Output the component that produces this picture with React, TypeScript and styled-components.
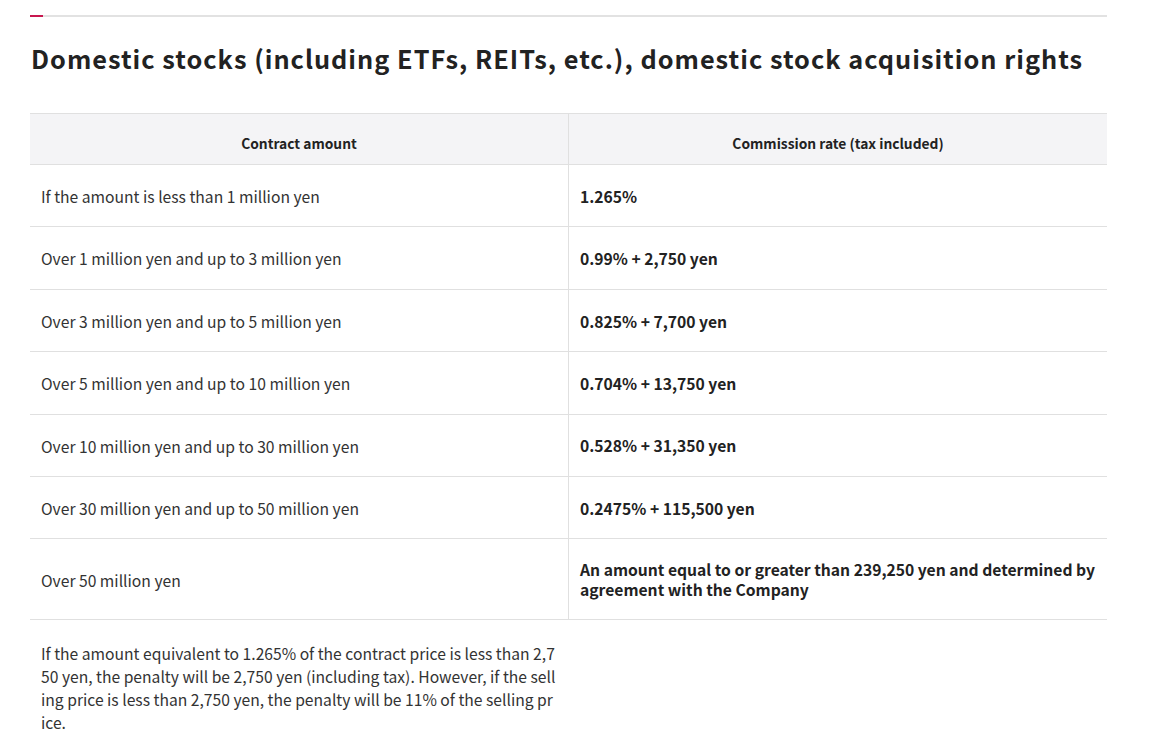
import React from "react";
import styled, { createGlobalStyle } from "styled-components";

const Global = createGlobalStyle`
  html, body { margin: 0; padding: 0; background: #fff; }
  body { font-family: "Noto Sans CJK JP", "Noto Sans", sans-serif; color: #333; }
`;

const Page = styled.div`
  padding: 15px 46px 0 30px;
`;

const Rule = styled.div`
  height: 2px;
  background: #e2e2e2;
  position: relative;
  &::before {
    content: "";
    position: absolute;
    left: 0;
    top: 0;
    width: 13px;
    height: 2px;
    background: #c8174f;
  }
`;

const Title = styled.h2`
  margin: 23px 0 0 1px;
  font-size: 25.3px;
  line-height: 36px;
  font-weight: 700;
  letter-spacing: 1px;
  color: #222;
  white-space: nowrap;
`;

const Table = styled.table`
  margin-top: 37px;
  width: 100%;
  border-collapse: collapse;
  table-layout: fixed;
  font-size: 15.66px;
`;

const Th = styled.th`
  background: #f4f4f6;
  border-top: 1px solid #e0e0e0;
  border-bottom: 1px solid #e0e0e0;
  font-size: 13.8px;
  font-weight: 700;
  line-height: 20px;
  padding: 19px 12px 11px;
  color: #222;
  text-align: center;
  & + & { border-left: 1px solid #e0e0e0; }
`;

const Td = styled.td<{ $bold?: boolean; $divider?: boolean }>`
  border-bottom: 1px solid #e0e0e0;
  border-left: ${(p) => (p.$divider ? "1px solid #e0e0e0" : "none")};
  padding: 21px 11px 19px;
  vertical-align: middle;
  font-weight: ${(p) => (p.$bold ? 700 : 400)};
  line-height: ${(p) => (p.$bold ? "20px" : "21.4px")};
  color: ${(p) => (p.$bold ? "#222" : "#333")};
`;

const NoteCell = styled.td`
  border-bottom: 1px solid #e0e0e0;
  padding: 23px 12.4px 17px 11px;
  line-height: 22.7px;
  word-break: break-all;
  color: #333;
`;

const rows: [string, string][] = [
  ["If the amount is less than 1 million yen", "1.265%"],
  ["Over 1 million yen and up to 3 million yen", "0.99% + 2,750 yen"],
  ["Over 3 million yen and up to 5 million yen", "0.825% + 7,700 yen"],
  ["Over 5 million yen and up to 10 million yen", "0.704% + 13,750 yen"],
  ["Over 10 million yen and up to 30 million yen", "0.528% + 31,350 yen"],
  ["Over 30 million yen and up to 50 million yen", "0.2475% + 115,500 yen"],
  [
    "Over 50 million yen",
    "An amount equal to or greater than 239,250 yen and determined by agreement with the Company",
  ],
];

export default function App() {
  return (
    <>
      <Global />
      <Page>
        <Rule />
        <Title>
          Domestic stocks (including ETFs, REITs, etc.), domestic stock acquisition rights
        </Title>
        <Table>
          <thead>
            <tr>
              <Th>Contract amount</Th>
              <Th>Commission rate (tax included)</Th>
            </tr>
          </thead>
          <tbody>
            {rows.map(([a, b]) => (
              <tr key={a}>
                <Td>{a}</Td>
                <Td $bold $divider>
                  {b}
                </Td>
              </tr>
            ))}
            <tr>
              <NoteCell>
                If the amount equivalent to 1.265% of the contract price is less than 2,750 yen, the
                penalty will be 2,750 yen (including tax). However, if the selling price is less
                than 2,750 yen, the penalty will be 11% of the selling price.
              </NoteCell>
              <NoteCell />
            </tr>
          </tbody>
        </Table>
      </Page>
    </>
  );
}
